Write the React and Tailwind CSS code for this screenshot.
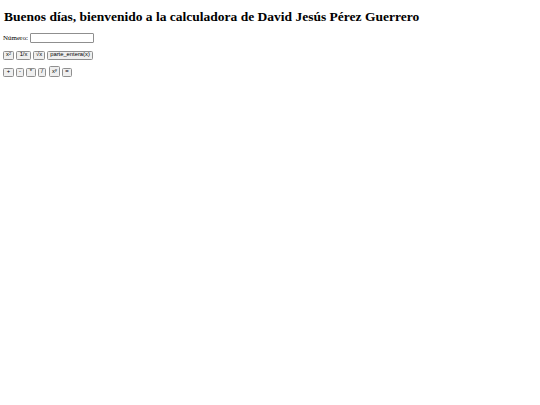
export default function App() {
  const btn =
    "bg-[#efefef] border border-[#8f8f8f] rounded-[1.5px] px-[2.5px] h-[9px] text-[5.8px] leading-none text-black font-['Liberation_Sans',Arial,sans-serif] flex items-center justify-center";
  return (
    <div className="bg-white w-[540px] h-[405px] px-[3px] pt-[9px] font-['Liberation_Serif','Times_New_Roman',serif] text-black">
      <h1 className="text-[13.5px] font-bold leading-[15px] mb-[9px] ml-[1px]">
        Buenos días, bienvenido a la calculadora de David Jesús Pérez Guerrero
      </h1>
      <div className="flex items-center text-[7px] leading-[8px] h-[10px] mb-[7px]">
        <span>Número:</span>
        <span className="ml-[2px] w-[64px] h-[10px] border border-[#8f8f8f] rounded-[1px] bg-white" />
      </div>
      <div className="flex items-center gap-[2px] h-[10px] mb-[6px]">
        <span className={btn + " w-[11px]"}>
          x<sup className="text-[3.8px] -top-[1.5px] relative">2</sup>
        </span>
        <span className={btn + " w-[15px]"}>1/x</span>
        <span className={btn + " w-[12px]"}>√x</span>
        <span className={btn + " w-[46px]"}>parte_entera(x)</span>
      </div>
      <div className="flex items-end gap-[2px] h-[11px]">
        <span className={btn + " w-[11px] mb-[0.5px]"}>+</span>
        <span className={btn + " w-[8px] mb-[0.5px]"}>-</span>
        <span className={btn + " w-[10px] mb-[0.5px]"}>*</span>
        <span className={btn + " w-[8px] mb-[0.5px]"}>/</span>
        <span className={btn + " w-[11px] !h-[11px] ml-[1px]"}>
          x<sup className="text-[3.8px] -top-[1.5px] relative">y</sup>
        </span>
        <span className={btn + " w-[10px] mb-[0.5px]"}>=</span>
      </div>
    </div>
  );
}
